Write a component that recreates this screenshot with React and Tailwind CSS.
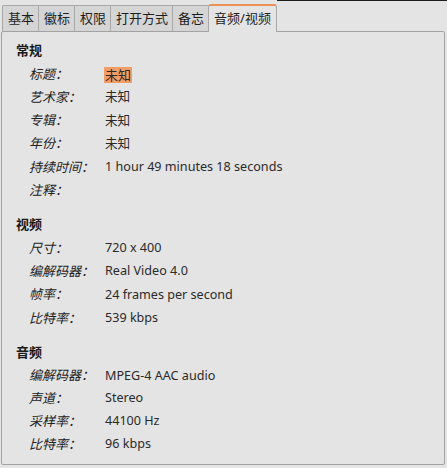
import React from "react";

const FONT = {
  fontFamily: '"Noto Sans", "Noto Sans CJK SC", sans-serif',
};

const tabs = ["基本", "徽标", "权限", "打开方式", "备忘"];

const sections = [
  {
    title: "常规",
    rows: [
      ["标题：", "未知", true],
      ["艺术家：", "未知"],
      ["专辑：", "未知"],
      ["年份：", "未知"],
      ["持续时间：", "1 hour 49 minutes 18 seconds"],
      ["注释：", ""],
    ],
  },
  {
    title: "视频",
    rows: [
      ["尺寸：", "720 x 400"],
      ["编解码器：", "Real Video 4.0"],
      ["帧率：", "24 frames per second"],
      ["比特率：", "539 kbps"],
    ],
  },
  {
    title: "音频",
    rows: [
      ["编解码器：", "MPEG-4 AAC audio"],
      ["声道：", "Stereo"],
      ["采样率：", "44100 Hz"],
      ["比特率：", "96 kbps"],
    ],
  },
];

function Section({ title, rows, tight }) {
  return (
    <div className="flex flex-col">
      <div className="h-[24px] leading-[23px] font-bold text-[13px] text-[#1a1a1a]">
        {title}
      </div>
      {rows.map(([label, value, hl]) => (
        <div
          key={label}
          className={`flex items-center text-[13px] text-[#2a2a2a] ${tight ? "h-[22.7px]" : "h-[23.2px]"}`}
        >
          <span className="w-[76px] ml-[13px] italic text-[#222]">{label}</span>
          <span
            className={
              hl
                ? "bg-[#f39c66] px-[1px] -ml-[1px] leading-[16px]"
                : "text-[12.6px]"
            }
          >
            {value}
          </span>
        </div>
      ))}
    </div>
  );
}

export default function App() {
  return (
    <div
      className="w-[447px] h-[468px] bg-[#e4e4e4] relative overflow-hidden"
      style={FONT}
    >
      <div className="absolute top-0 left-[277px] right-0 h-px bg-[#1c1c1c]" />
      <div className="flex items-end pl-[2px] pt-[3px] h-[31px]">
        {tabs.map((t) => (
          <div
            key={t}
            className="h-[26px] flex items-center pl-[5px] pr-[4px] border-l border-t border-[#a8a8a8] first:rounded-tl-[2px] bg-[#d5d5d5] text-[13px] text-[#1e1e1e]"
          >
            {t}
          </div>
        ))}
        <div className="h-[28px] -mb-px z-10 flex items-center px-[5px] border-x border-t-2 border-x-[#a8a8a8] border-t-[#e8925a] rounded-t-[3px] bg-[#e4e4e4] text-[13px] text-[#1e1e1e]">
          音频/视频
        </div>
      </div>
      <div className="ml-px mr-[2px] h-[434px] border border-[#a2a2a2] rounded-[2px] pl-[14px] pt-[7px] flex flex-col gap-[11px]">
        {sections.map((s, i) => (
          <Section key={s.title} {...s} tight={i === 2} />
        ))}
      </div>
    </div>
  );
}
